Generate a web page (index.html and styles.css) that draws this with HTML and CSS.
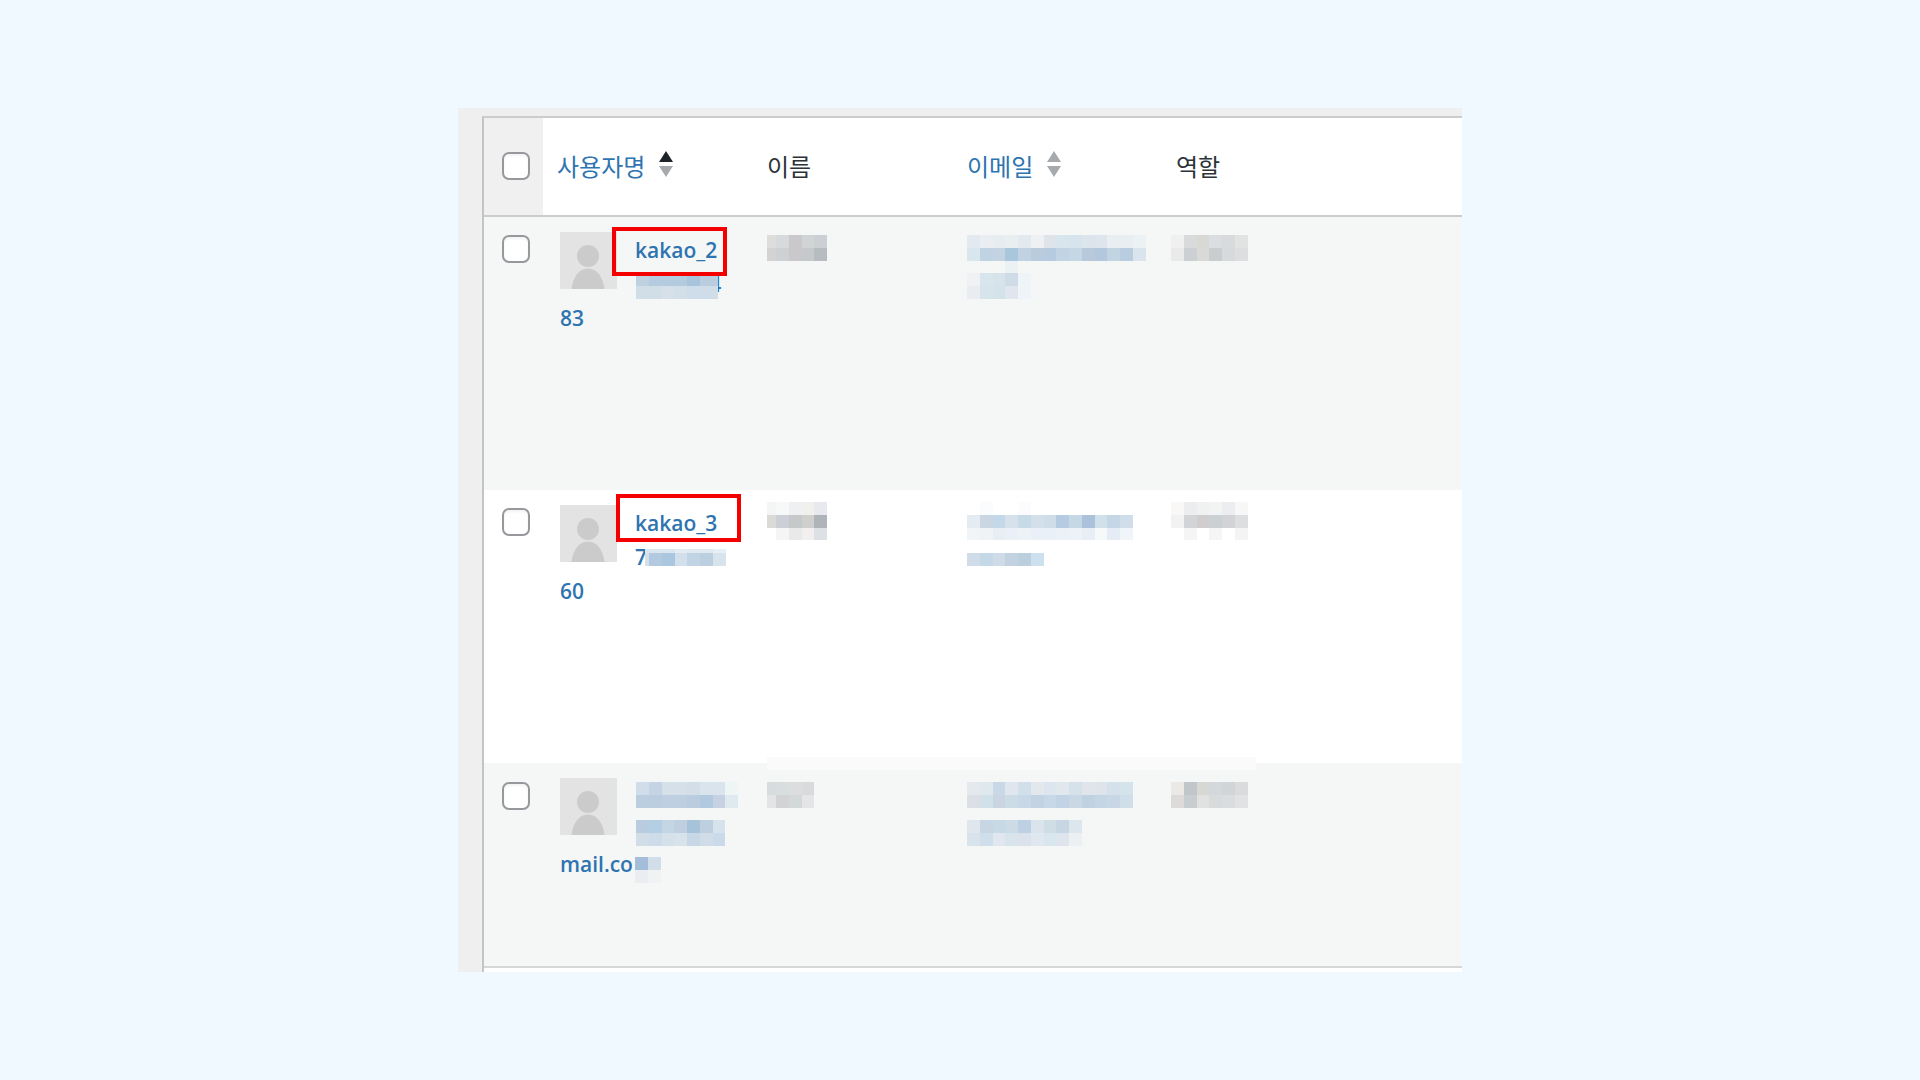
FILE: index.html
```html
<!DOCTYPE html>
<html lang="ko">
<head>
<meta charset="utf-8">
<meta name="viewport" content="width=device-width, initial-scale=1">
<title>사용자</title>
<link rel="stylesheet" href="styles.css">
</head>
<body>
<svg class="sprite" aria-hidden="true">
  <symbol id="avatar" viewBox="0 0 57 57">
    <rect width="57" height="57" fill="#e3e3e3"/>
    <circle cx="28" cy="24" r="11" fill="#cbcbcb"/>
    <path d="M11.500 57C13 45 19 36.500 28 36.500S43 45 44.500 57z" fill="#cbcbcb"/>
  </symbol>
</svg>
<main class="panel">
  <div class="frame">
    <table class="users">
      <colgroup><col class="col-check"><col class="col-user"><col class="col-name"><col class="col-email"><col></colgroup>
      <thead>
        <tr>
          <td class="check"><input type="checkbox" aria-label="모두 선택"></td>
          <th scope="col"><a class="sort" href="#user">사용자명
            <svg class="arrows" viewBox="0 0 14 26" aria-hidden="true"><path d="M7 0l7 11H0z" fill="#1d2327"/><path d="M0 15h14L7 26z" fill="#a7aaad"/></svg></a></th>
          <th scope="col">이름</th>
          <th scope="col"><a class="sort" href="#email">이메일
            <svg class="arrows" viewBox="0 0 14 26" aria-hidden="true"><path d="M7 0l7 11H0z" fill="#a7aaad"/><path d="M0 15h14L7 26z" fill="#a7aaad"/></svg></a></th>
          <th scope="col">역할</th>
        </tr>
      </thead>
      <tbody>
        <tr class="tall">
          <td class="check"><input type="checkbox" aria-label="kakao_2 선택"></td>
          <td class="user">
            <div class="identity">
              <svg class="avatar" aria-hidden="true"><use href="#avatar"/></svg>
              <a class="lines" href="#kakao_2">
                <span class="line">kakao_2</span>
                <span class="line end">4<svg class="mosaic cover" data-cells="bfd0df b5cbdf b4cbdf b3cbdf a8c3dc b9cddf b9cddf/d1dee8 d1dee8 d7dfe9 d3dfe8 cedde9 cedde8 d1dee8" data-last="5"></svg></span>
              </a>
              <span class="highlight first"></span>
            </div>
            <a class="line" href="#kakao_2">83</a>
          </td>
          <td><svg class="mosaic" data-first="9" data-cells="dddedc d6dadd cac8ca d1d4d5 cccfd3/d3d3d3 cdd1d4 cac8ca c5c9cb b7bcc0"></svg></td>
          <td><svg class="mosaic" data-cells="e2e9f1 eaedf1 e7ecf0 e9eef0 e2e9ef eef0f4 dfe4eb d8e5ec d6e5ed dde5ec dfe5ec e8eef1 e8eef1 ecf1f4/dae6ed bfd3e2 c3d3e2 a9c6dd c1d3e2 bacbde b7cbe0 c1d4e3 c5d6e4 b8c9dc b3c8dc c0d4e2 b9cde1 dae4ed/- - - ecf1f4/f0f1f3 d8e5ed d6e3eb cfdce7 eff4f8/e9ecf1 d6e4ec d4e2ea e1e5ed eff4f8"></svg></td>
          <td class="role"><svg class="mosaic" data-cells="f0f0f0 d9dadb d8d8d5 dadee1 d8dadc e1e2e2/eaeaea cdd0d3 d9dad8 c9cdd0 d6dadb dddee0"></svg></td>
        </tr>
        <tr class="tall">
          <td class="check"><input type="checkbox" aria-label="kakao_3 선택"></td>
          <td class="user">
            <div class="identity">
              <svg class="avatar" aria-hidden="true"><use href="#avatar"/></svg>
              <a class="lines" href="#kakao_3">
                <span class="line">kakao_3</span>
                <span class="line">7<svg class="mosaic after" data-first="4" data-top="4" data-cells="dce6ef dce6ef dce6ef e4ebf2 dfe9f0 e0e9f0 e8eff5/d5e0eb b2c9e0 aac7df d3dfeb c1d4e4 bccfe0 d7e4ee"></svg></span>
              </a>
              <span class="highlight second"></span>
            </div>
            <a class="line" href="#kakao_3">60</a>
          </td>
          <td class="raised"><svg class="mosaic" data-first="9" data-cells="f5f5f5 f7f9f8 eef0f2 f0f0ed e7e9ee/dadad7 ccd0d6 c7c8c9 cfd0ce afb4bb/- f5f5f5 e9e9e9 f1f0ee dde1e6"></svg></td>
          <td class="raised"><svg class="mosaic" data-cells="- fafcfe - - fafcfe/e4ebf3 cad7e3 c3d8e8 d7e1eb c7dae8 d3e0ea cfdde9 b5cbe2 c6d7e6 abc2da d0e1e9 c5d6e6 cfdeea/f1f5f8 eff3f6 e7eef4 e9f0f7 edf2f6 e9f0f7 e9f0f7 ebf1f8 edf2f8 e8eef5 f5f9f9 e5ecf5 f0f5fa/-/d0dde8 c5d8e7 cfdce8 c3d2e0 bccfdf cce0ee"></svg></td>
          <td class="role raised"><svg class="mosaic" data-cells="f9f8f7 ecedef f0f1f1 f2f4f3 ecedf0 f7f7f7/f2f2f2 d3d4d7 d1cccd cbd0d3 d2d3d7 dddee0/- f5f5f5 - f5f5f5 - f4f4f5"></svg></td>
        </tr>
        <tr class="short">
          <td class="check"><input type="checkbox" aria-label="사용자 선택"></td>
          <td class="user">
            <div class="identity">
              <svg class="avatar" aria-hidden="true"><use href="#avatar"/></svg>
              <a class="lines" href="#mail" aria-label="사용자">
                <svg class="mosaic" data-cells="d1dde8 c4d4e4 d5e0e9 d5e0e9 d3dee8 d9e4ec dae4ec eff4f5/bbcee0 bbcee0 bdcfe1 bdcfe1 b9cddf b1cae0 c6d2e1 dfe9f0/-/b9cbdf b4cee3 c4d6e4 bfcfdf a7c3d9 bed0e0 d6e2ec/d1dee8 cedbe8 d5e1ea d8e2eb c7d7e5 d0dce7 cadae8"></svg>
              </a>
            </div>
            <a class="line" href="#mail">mail.co<svg class="mosaic tail" data-cells="a4bed9 d1deea/eaeef2 f0f2f4"></svg></a>
          </td>
          <td class="raised"><svg class="mosaic" data-first="9" data-cells="d9dcdc d8dddf dcdddf d9dadc/e2e4e6 d1d3d4 d3d8d9 e3e5e7"></svg><span class="band"></span></td>
          <td class="raised"><svg class="mosaic" data-cells="e4e9ed dfe8ec c8d8e6 dfe6ed d0dfea e3e8ed dde5ee e0e7ed d6e2ea dfe5eb dde4ec d5e1ea d5e3ea/dce0e6 d0e1e9 cbd4e1 cbdce7 c8d8e6 c3d3e4 c7d8e7 c1d3e5 cad7e4 bfd2e2 c4d5e4 c8d6e5 d0deea/-/e0e6ed c8d6e4 c6d9e5 cddbe6 bed0e3 dbe3ed cfdde5 c8d6e4 dee6ed/d9e3ec cedeea e0e7ee d9e3ec dbe2eb dfe7ef dae6ed dfe5ed ecf0f3"></svg></td>
          <td class="role raised"><svg class="mosaic" data-cells="eae9e6 c1c6ca d7d7d4 d3d8da d1d5d8 dadbdc/dcdbda c8cdcf e0e2e1 d9dadb dadde0 e1e2e4"></svg></td>
        </tr>
      </tbody>
    </table>
  </div>
</main>
<script src="script.js"></script>
</body>
</html>
```
FILE: styles.css
```css
* {
  box-sizing: border-box;
}

body {
  display: grid;
  align-content: center;
  min-height: 100vh;
  margin: 0;
  background: #f0f9ff;
  color: #2c3338;
  font: 600 21px/34px "Open Sans", "Noto Sans", "Noto Sans CJK KR", sans-serif;
}

a {
  color: #2e74b0;
  text-decoration: none;
}

.sprite {
  position: absolute;
  width: 0;
  height: 0;
}

.panel {
  width: 100%;
  max-width: 1004px;
  margin: 0 auto;
  padding: 8px 0 0 24px;
  background: #efefef;
}

.frame {
  padding-bottom: 4px;
  border-top: 2px solid #cbccce;
  border-left: 2px solid #c3c4c7;
  background: #fff;
}

.users {
  width: 100%;
  border-spacing: 0;
  border-bottom: 2px solid #d5d7d7;
  table-layout: fixed;
}

.col-check { width: 59px; }
.col-user { width: 210px; }
.col-name { width: 200px; }
.col-email { width: 209px; }

th,
td {
  padding: 18px 0 0 14px;
  text-align: left;
  vertical-align: top;
}

thead th,
thead td {
  height: 99px;
  padding-top: 0;
  padding-bottom: 2px;
  border-bottom: 2px solid #cbccce;
  vertical-align: middle;
}

th {
  font: 400 24px/36px "Noto Sans CJK KR", sans-serif;
}

thead .check {
  background: #f0f0f1;
}

.tall { height: 273px; }
.short { height: 203px; }

tbody tr:nth-child(odd) {
  background: #f5f7f7;
}

.check {
  padding-left: 18px;
}

.short .check {
  padding-top: 19px;
}

.check input {
  display: block;
  width: 28px;
  height: 28px;
  margin: 0;
  border: 2px solid #96989c;
  border-radius: 7px;
  background: #fff;
  box-shadow: inset 0 2px 3px #0000000d;
  appearance: none;
}

.check input:checked {
  background: #2e74b0;
}

.sort {
  display: flex;
  align-items: center;
  gap: 14px;
}

.arrows {
  width: 14px;
  height: 26px;
  margin-bottom: 4px;
}

.user {
  padding: 15px 0 0 17px;
}

.identity {
  position: relative;
  display: flex;
  gap: 18px;
  height: 69px;
}

.avatar {
  flex: none;
  width: 57px;
  height: 57px;
}

.lines {
  padding-top: 1px;
}

.line {
  position: relative;
  display: flex;
  align-items: center;
}

.end {
  justify-content: flex-end;
  margin-right: -4px;
}

.mosaic {
  display: block;
  flex: none;
  shape-rendering: crispEdges;
}

.lines > .mosaic {
  margin: 3px 0 0 1px;
}

.cover {
  position: absolute;
  top: 6px;
  left: 1px;
}

.after {
  margin-left: -2px;
}

.tail {
  position: absolute;
  top: 10px;
  left: 75px;
}

.highlight {
  position: absolute;
  border: 4px solid #f40000;
}

.first {
  top: -5px;
  left: 52px;
  width: 115px;
  height: 49px;
}

.second {
  top: -11px;
  left: 56px;
  width: 125px;
  height: 48px;
}

.role {
  padding-left: 9px;
}

.raised {
  position: relative;
  padding-top: 12px;
}

.short .raised {
  padding-top: 19px;
}

.band {
  position: absolute;
  z-index: 1;
  top: -6px;
  left: 14px;
  width: 489px;
  height: 13px;
  background: #fafafa;
}
```
FILE: script.js
```js
// Draws each pixelated redaction: rows are split by "/", cells by a space, "-" is empty.
const CELL = 12.75;
const NS = "http://www.w3.org/2000/svg";

document.querySelectorAll(".mosaic").forEach((svg) => {
  const rows = svg.dataset.cells.split("/").map((row) => row.split(" "));
  const columns = Math.max(...rows.map((row) => row.length));
  const first = Number(svg.dataset.first || CELL);
  const last = Number(svg.dataset.last || CELL);
  const top = Number(svg.dataset.top || CELL);
  const columnEdge = (i) => {
    if (i === 0) return 0;
    if (i === columns) return Math.round(first + (i - 2) * CELL + last);
    return Math.round(first + (i - 1) * CELL);
  };
  const rowEdge = (i) => (i === 0 ? 0 : Math.round(top + (i - 1) * CELL));

  svg.setAttribute("width", columnEdge(columns));
  svg.setAttribute("height", rowEdge(rows.length));
  svg.setAttribute("aria-hidden", "true");

  rows.forEach((row, y) => row.forEach((color, x) => {
    if (color === "-") return;
    const rect = document.createElementNS(NS, "rect");
    rect.setAttribute("x", columnEdge(x));
    rect.setAttribute("y", rowEdge(y));
    rect.setAttribute("width", columnEdge(x + 1) - columnEdge(x));
    rect.setAttribute("height", rowEdge(y + 1) - rowEdge(y));
    rect.setAttribute("fill", "#" + color);
    svg.append(rect);
  }));
});
```
